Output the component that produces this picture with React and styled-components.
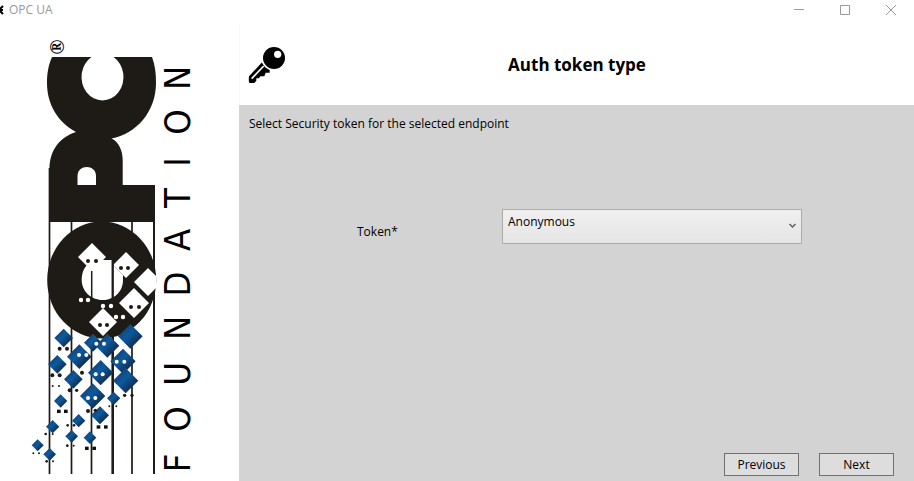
import React from "react";
import styled, { createGlobalStyle } from "styled-components";

const GlobalStyle = createGlobalStyle`
  *, *::before, *::after { box-sizing: border-box; }
  body {
    margin: 0;
    background: #ffffff;
    color: #000000;
    font-family: "Open Sans", "Noto Sans", sans-serif;
    font-size: 12px;
    line-height: 16px;
  }
`;

const Window = styled.div`
  display: flex;
  flex-direction: column;
  min-height: 100vh;
`;

const TitleBar = styled.header`
  display: flex;
  align-items: center;
  height: 24px;
  padding-bottom: 5px;
  color: #999999;
`;

const AppIcon = styled.svg`
  width: 4px;
  height: 10px;
  margin-right: 5px;
`;

const WindowTitle = styled.span`
  flex: 1;
`;

const CaptionButton = styled.button`
  display: flex;
  align-items: center;
  justify-content: center;
  width: 46px;
  height: 19px;
  padding: 0;
  border: 0;
  background: transparent;
  color: #999999;
`;

const Content = styled.div`
  display: flex;
  flex: 1;
`;

const Sidebar = styled.aside`
  flex: 0 0 239px;
`;

const Logo = styled.svg`
  display: block;
  width: 100%;
`;

const Wizard = styled.main`
  display: flex;
  flex: 1;
  flex-direction: column;
  min-width: 0;
`;

const PageHeader = styled.div`
  display: grid;
  grid-template-columns: 40px 1fr 40px;
  align-items: center;
  height: 81px;
  padding: 0 8px;
  border-left: 1px solid #f8f8f8;
`;

const PageTitle = styled.h1`
  margin: 0;
  font-size: 17px;
  line-height: 24px;
  font-weight: 700;
  text-align: center;
`;

const Page = styled.form`
  display: flex;
  flex: 1;
  flex-direction: column;
  background: #d3d3d3;
`;

const Instruction = styled.p`
  margin: 0;
  padding: 11px 10px 0;
`;

const Field = styled.div`
  display: grid;
  grid-template-columns: 145px minmax(0, 300px);
  justify-content: center;
  margin-top: 77px;
  padding-left: 6px;
`;

const FieldLabel = styled.label`
  padding-top: 15px;
`;

const SelectBox = styled.div`
  position: relative;
`;

const Select = styled.select`
  display: block;
  appearance: none;
  width: 100%;
  height: 35px;
  padding: 0 24px 10px 5px;
  border: 1px solid #acacac;
  border-radius: 0;
  background: linear-gradient(#f0f0f0, #e5e5e5);
  color: #000000;
  font: inherit;
`;

const Chevron = styled.svg`
  position: absolute;
  top: 14px;
  right: 6px;
  pointer-events: none;
`;

const Actions = styled.div`
  display: flex;
  justify-content: flex-end;
  gap: 20px;
  margin-top: auto;
  padding: 0 20px 5px;
`;

const ActionButton = styled.button`
  width: 75px;
  height: 23px;
  padding: 0;
  border: 1px solid #707070;
  background: #dddddd;
  color: #000000;
  font: inherit;
`;

const blueTiles = [
  [116, 54, 28], [204, 68, 27], [247, 77, 36], [316, 49, 37], [163, 110, 37],
  [97, 133, 28], [227, 158, 38], [294, 124, 38], [145, 178, 28], [302, 182, 38],
  [203, 228, 38], [107, 243, 20], [266, 235, 20], [225, 286, 27], [161, 302, 20],
  [83, 320, 20], [140, 349, 19], [195, 353, 19], [38, 376, 18], [74, 403, 19],
];
const tileEyes = [
  [214, 71], [237, 71], [162, 105], [184, 105], [212, 163], [233, 163],
  [275, 125], [298, 125], [189, 234], [211, 234],
];
const darkDots = [
  [104, 86, 6], [126, 86, 6], [171, 158, 6], [82, 166, 6], [104, 166, 6],
  [134, 211, 6], [155, 211, 5], [189, 273, 6], [211, 271, 5], [299, 226, 5],
  [321, 226, 5], [83, 198, 3], [102, 198, 3], [253, 259, 3], [274, 259, 3],
  [128, 316, 4], [147, 316, 4], [62, 342, 4], [83, 342, 3], [127, 377, 4],
  [146, 377, 3], [25, 400, 3], [42, 400, 3], [65, 424, 4], [84, 424, 3],
];
const darkSquares = [
  [101, 274], [122, 274], [220, 321], [242, 321], [185, 385], [207, 385],
];
const whiteTiles = [
  [92, 257, 14], [126, 265, 13], [148, 282, 14], [134, 303, 15], [103, 322, 14],
];
const whiteTileEyes = [
  [88, 261], [96, 261], [121, 268], [128, 268], [131, 307], [139, 307], [100, 325], [107, 325],
];
const whiteDots = [
  [81, 300], [88, 300], [103, 306], [111, 306], [116, 317], [123, 317],
];

const diamond = ([x, y, r]) => `M${x} ${y - r}L${x + r} ${y}L${x} ${y + r}L${x - r} ${y}Z`;

function OpcLogo() {
  return (
    <Logo viewBox="0 24 239 457" role="img" aria-label="OPC Foundation">
      <defs>
        <linearGradient id="tile" x1="0.2" y1="0.2" x2="0.8" y2="0.8">
          <stop offset="0" stopColor="#164273" />
          <stop offset="0.4" stopColor="#0b5a9e" />
          <stop offset="1" stopColor="#122c4c" />
        </linearGradient>
        <clipPath id="ring">
          <rect x="40" y="220" width="116" height="120" />
        </clipPath>
      </defs>
      <g stroke="#1e1a16">
        <path d="M49.500 168V474M71.500 222V474M91.500 330V474M132 222V474" strokeWidth="1.700" />
        <path d="M112.700 330V474" strokeWidth="2.600" />
        <path d="M154 185V474" strokeWidth="2" />
      </g>
      <g fill="#1e1a16">
        <path d="M52 57H91.500A21 23.500 0 1 0 113.500 57H152C155 65 156 73 156 83C156 112 136 134 111.500 138.500C119 142 122.700 151 122.700 160V185H154.500V222H49.500V169C49.500 150 60 137 76 132C58 122 47 105 47 83C47 73 48.500 65 52 57Z" />
        <ellipse cx="101.700" cy="280" rx="54.500" ry="58.500" />
      </g>
      <path d="M77.500 185V176C77.500 164 96 164 96 176V185Z" fill="#ffffff" />
      <g clipPath="url(#ring)">
        <path d="M92 260H112L113 265L120 272L123 275V280C123 292 114 300 102.500 300C91 300 81.700 291 81.700 280C81.700 273 84 268 87 265Z" fill="#ffffff" />
        <path d={whiteTiles.map(diamond).join("")} fill="#ffffff" />
        <path d="M91.700 271V298" stroke="#1e1a16" strokeWidth="1.500" />
        <path d="M112.700 260V298" stroke="#1e1a16" strokeWidth="2.300" />
      </g>
      {whiteTileEyes.map(([x, y]) => (
        <circle key={`${x}-${y}`} cx={x} cy={y} r="2" fill="#1e1a16" />
      ))}
      {whiteDots.map(([x, y]) => (
        <circle key={`${x}-${y}`} cx={x} cy={y} r="2.200" fill="#ffffff" />
      ))}
      <g transform="translate(25 320) scale(0.3333)">
        {blueTiles.map((t) => (
          <path key={t.join("-")} d={diamond(t)} fill="url(#tile)" />
        ))}
        {tileEyes.map(([x, y]) => (
          <circle key={`${x}-${y}`} cx={x} cy={y} r="6" fill="#ffffff" />
        ))}
        {darkDots.map(([x, y, r]) => (
          <circle key={`${x}-${y}`} cx={x} cy={y} r={r} fill="#1e1a16" />
        ))}
        {darkSquares.map(([x, y]) => (
          <rect key={`${x}-${y}`} x={x - 5} y={y - 5} width="11" height="10" fill="#111111" />
        ))}
      </g>
      <text
        transform="translate(64 47) rotate(-90)"
        textAnchor="middle"
        fontFamily="Liberation Serif, serif"
        fontSize="20"
        fontWeight="700"
      >
        ®
      </text>
      <text
        transform="translate(190 0) rotate(-90)"
        x="-463 -419 -374 -328 -284 -240 -198 -162 -122 -78"
        textAnchor="middle"
        fontFamily="DejaVu Sans Condensed, DejaVu Sans, sans-serif"
        fontSize="36"
      >
        FOUNDATION
      </text>
    </Logo>
  );
}

function KeyIcon() {
  return (
    <svg width="40" height="40" viewBox="25 30 120 120" aria-hidden="true">
      <path d="M67 82L28 124Q26 143 30 144H44L50 137V130H58L62 124H74L78 113H90V100L78 97Z" />
      <circle cx="103" cy="69" r="38" fill="#ffffff" />
      <circle cx="103" cy="69" r="33" />
      <circle cx="114" cy="58" r="11" fill="#ffffff" />
      <path d="M72 93L36 131" stroke="#ffffff" strokeWidth="5" />
    </svg>
  );
}

export default function App() {
  return (
    <>
      <GlobalStyle />
      <Window>
        <TitleBar>
          <AppIcon viewBox="0 0 4 10" aria-hidden="true">
            <path d="M3 1L0 4M0 5H3M0 6L3 9" stroke="#000000" strokeWidth="2" />
          </AppIcon>
          <WindowTitle>OPC UA</WindowTitle>
          <CaptionButton type="button" aria-label="Minimize">
            <svg width="10" height="10" viewBox="0 0 10 10">
              <path d="M0 4.500H10" stroke="currentColor" />
            </svg>
          </CaptionButton>
          <CaptionButton type="button" aria-label="Maximize">
            <svg width="10" height="10" viewBox="0 0 10 10">
              <path d="M0.500 0.500H9.500V9.500H0.500Z" fill="none" stroke="currentColor" />
            </svg>
          </CaptionButton>
          <CaptionButton type="button" aria-label="Close">
            <svg width="10" height="10" viewBox="0 0 10 10">
              <path d="M0 0L10 10M10 0L0 10" stroke="currentColor" />
            </svg>
          </CaptionButton>
        </TitleBar>
        <Content>
          <Sidebar>
            <OpcLogo />
          </Sidebar>
          <Wizard>
            <PageHeader>
              <KeyIcon />
              <PageTitle>Auth token type</PageTitle>
            </PageHeader>
            <Page onSubmit={(e) => e.preventDefault()}>
              <Instruction>Select Security token for the selected endpoint</Instruction>
              <Field>
                <FieldLabel htmlFor="token">Token*</FieldLabel>
                <SelectBox>
                  <Select id="token" defaultValue="Anonymous">
                    <option>Anonymous</option>
                  </Select>
                  <Chevron width="7" height="6" viewBox="0 0 7 6" aria-hidden="true">
                    <path d="M0.500 1L3.500 4L6.500 1" fill="none" stroke="#606060" strokeWidth="1.500" />
                  </Chevron>
                </SelectBox>
              </Field>
              <Actions>
                <ActionButton type="button">Previous</ActionButton>
                <ActionButton type="submit">Next</ActionButton>
              </Actions>
            </Page>
          </Wizard>
        </Content>
      </Window>
    </>
  );
}
